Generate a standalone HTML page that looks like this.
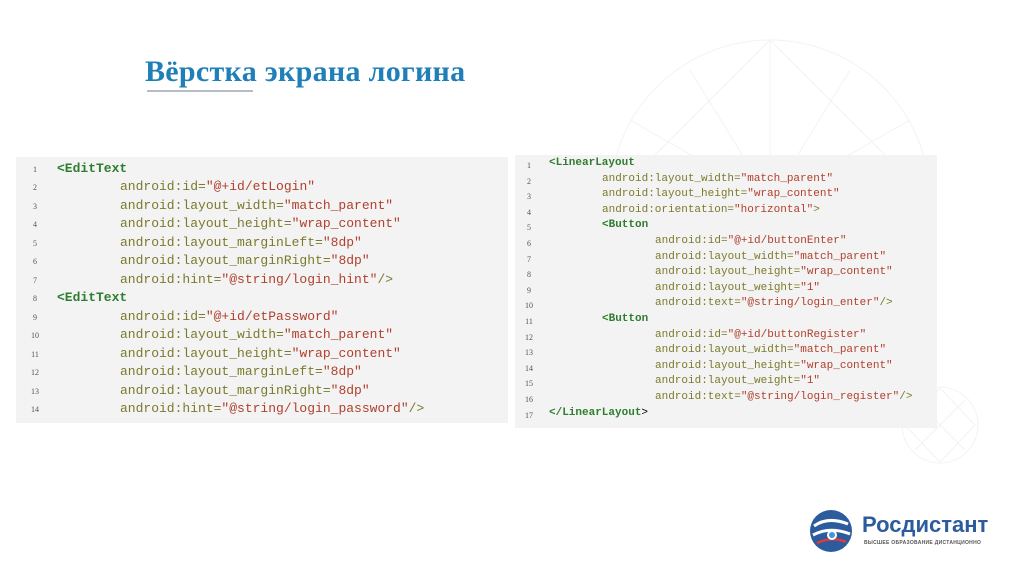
<!DOCTYPE html>
<html><head><meta charset="utf-8"><style>
body{margin:0;width:1024px;height:574px;background:#fff;position:relative;overflow:hidden;font-family:"Liberation Sans",sans-serif}
.t{position:absolute;left:145px;top:55px;font:bold 30px "Liberation Serif","DejaVu Serif",serif;color:#1f7fb8;white-space:nowrap;letter-spacing:0.3px}
.ul{position:absolute;left:147px;top:90px;width:106px;height:2px;background:#b8bcc4}
.box{position:absolute;background:#f3f3f3}
.l{position:absolute;white-space:pre;font-family:"Liberation Mono","DejaVu Sans Mono","Courier New",Courier,monospace !important}
.n{position:absolute;font:8px "Liberation Serif",serif;color:#555;text-align:center;width:10px}
.g{color:#2f7d2f;font-weight:bold}.a{color:#7b7a2c}.s{color:#b0402c}
</style></head><body>
<svg style="position:absolute;left:570px;top:30px" width="420" height="440" fill="none" stroke="#f2f3f5" stroke-width="1">
<circle cx="200" cy="170" r="160"/><path d="M40 170 L200 10 L360 170 L200 330 Z M60 90 L340 250 M60 250 L340 90 M200 10 L200 330 M40 170 L360 170 M120 40 L280 300 M280 40 L120 300"/>
<circle cx="370" cy="395" r="38"/><path d="M335 395 L370 358 L405 395 L370 432 Z M345 370 L395 420 M345 420 L395 370"/>
</svg>
<div class="t">Вёрстка экрана логина</div><div class="ul"></div>
<div class="box" style="left:16px;top:157px;width:492px;height:266px"></div>
<div class="box" style="left:515px;top:155px;width:422px;height:273px"></div>
<div id="L"></div><div id="R"></div>
<script>
function q(s){return s.replace(/&/g,'&amp;').replace(/</g,'&lt;')}
function fmt(t){
 var m=t.match(/^(\s*)(<\/?\w+)(.*)$/);if(m)return m[1]+'<span class="g">'+q(m[2])+'</span>'+q(m[3]);
 m=t.match(/^(\s*)([\w:]+=)("[^"]*")(.*)$/);if(m)return m[1]+'<span class="a">'+m[2]+'</span><span class="s">'+q(m[3])+'</span><span class="a">'+q(m[4])+'</span>';
 return q(t);}
function put(lines,x0,indent,y0,dy,fs,nx){var h='';lines.forEach(function(t,i){var lv=t[0],tx=t[1];
 h+='<div class="n" style="left:'+nx+'px;top:'+(y0+i*dy+4)+'px">'+(i+1)+'</div>';
 h+='<div class="l" style="left:'+(x0+lv*indent)+'px;top:'+(y0+i*dy)+'px;font-size:'+fs+'px">'+fmt(tx)+'</div>';});return h;}
var L=[[0,'<EditText'],[1,'android:id="@+id/etLogin"'],[1,'android:layout_width="match_parent"'],[1,'android:layout_height="wrap_content"'],[1,'android:layout_marginLeft="8dp"'],[1,'android:layout_marginRight="8dp"'],[1,'android:hint="@string/login_hint"/>'],
[0,'<EditText'],[1,'android:id="@+id/etPassword"'],[1,'android:layout_width="match_parent"'],[1,'android:layout_height="wrap_content"'],[1,'android:layout_marginLeft="8dp"'],[1,'android:layout_marginRight="8dp"'],[1,'android:hint="@string/login_password"/>']];
var R=[[0,'<LinearLayout'],[1,'android:layout_width="match_parent"'],[1,'android:layout_height="wrap_content"'],[1,'android:orientation="horizontal">'],[1,'<Button'],[2,'android:id="@+id/buttonEnter"'],[2,'android:layout_width="match_parent"'],[2,'android:layout_height="wrap_content"'],[2,'android:layout_weight="1"'],[2,'android:text="@string/login_enter"/>'],[1,'<Button'],[2,'android:id="@+id/buttonRegister"'],[2,'android:layout_width="match_parent"'],[2,'android:layout_height="wrap_content"'],[2,'android:layout_weight="1"'],[2,'android:text="@string/login_register"/>'],[0,'</LinearLayout>']];
document.getElementById('L').innerHTML=put(L,57,63,161,18.46,13,30);
document.getElementById('R').innerHTML=put(R,549,53,157,15.6,11,524);
</script>
<svg style="position:absolute;left:808px;top:508px" width="46" height="46" viewBox="0 0 46 46">
<circle cx="23" cy="23" r="21" fill="#2d5c9e"/>
<path d="M6 18 Q20 8 40 16" stroke="#fff" stroke-width="3" fill="none"/>
<path d="M5 27 Q22 18 42 26" stroke="#fff" stroke-width="3" fill="none"/>
<path d="M9 35 Q24 28 38 34" stroke="#e03a3a" stroke-width="2.5" fill="none"/>
<circle cx="24" cy="27" r="5" fill="#fff"/><circle cx="24" cy="27" r="3" fill="#3a9ad9"/>
</svg>
<div style="position:absolute;left:862px;top:512px;font:bold 22px 'Liberation Sans',sans-serif;color:#2d5c9e">Росдистант</div>
<div style="position:absolute;left:864px;top:540px;font:bold 5px 'Liberation Sans',sans-serif;color:#555;letter-spacing:.3px">ВЫСШЕЕ ОБРАЗОВАНИЕ ДИСТАНЦИОННО</div>
</body></html>
